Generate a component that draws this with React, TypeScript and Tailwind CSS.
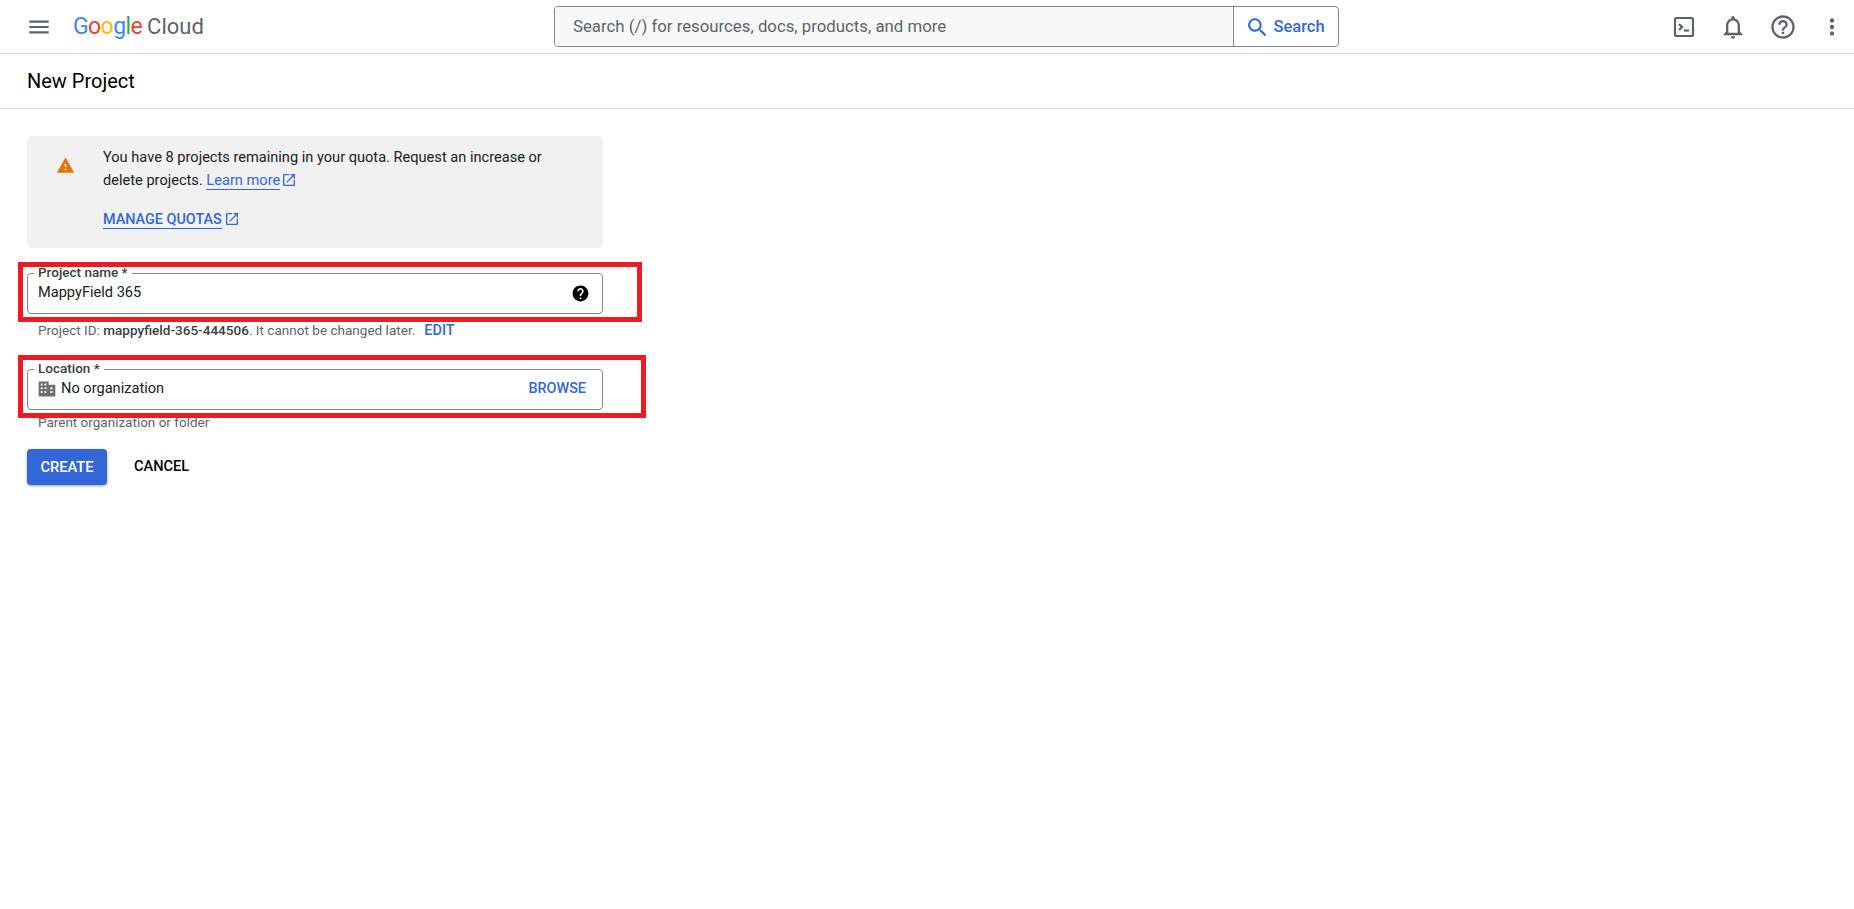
import React from "react";

const Icon = ({ d, className }: { d: string; className: string }) => (
  <svg viewBox="0 0 24 24" fill="currentColor" className={className}>
    <path d={d} />
  </svg>
);

const OPEN_NEW =
  "M19 19H5V5h7V3H5c-1.11 0-2 .9-2 2v14c0 1.1.89 2 2 2h14c1.1 0 2-.9 2-2v-7h-2v7zM14 3v2h3.59l-9.83 9.83 1.41 1.41L19 6.41V10h2V3h-7z";

const BuildingIcon = () => (
  <svg viewBox="0 0 24 24" className="ml-[-1px] h-[20px] w-[20px] text-[#6f6f6f]">
    <path fill="currentColor" d="M2 3h12v4h8v14H2z" />
    <g fill="#fff">
      <rect x="4.5" y="5.5" width="2.2" height="2.2" />
      <rect x="9" y="5.5" width="2.2" height="2.2" />
      <rect x="4.5" y="10" width="2.2" height="2.2" />
      <rect x="9" y="10" width="2.2" height="2.2" />
      <rect x="4.5" y="14.5" width="2.2" height="2.2" />
      <rect x="9" y="14.5" width="2.2" height="2.2" />
      <rect x="16" y="10" width="2.6" height="2.2" />
      <rect x="16" y="14.5" width="2.6" height="2.2" />
    </g>
  </svg>
);

const Header = () => (
  <header className="flex h-[54px] items-center border-b border-[#dadce0] pl-[27px] pr-[9px]">
    <Icon
      d="M3 18h18v-2H3v2zm0-5h18v-2H3v2zm0-7v2h18V6H3z"
      className="h-[24px] w-[24px] shrink-0 scale-[1.08] text-[#5f6368]"
    />
    <div className="ml-[22px] flex w-[481px] items-baseline text-[23px] leading-none tracking-[-0.6px]">
      <span className="text-[#4285f4]">G</span>
      <span className="text-[#ea4335]">o</span>
      <span className="text-[#fbbc04]">o</span>
      <span className="text-[#4285f4]">g</span>
      <span className="text-[#34a853]">l</span>
      <span className="text-[#ea4335]">e</span>
      <span className="ml-[5px] tracking-normal text-[#5f6368] text-[22px]">Cloud</span>
    </div>
    <div className="flex h-[41px] w-[785px] overflow-hidden rounded-[4px] border border-[#80868b]">
      <div className="flex flex-1 items-center bg-[#f8f8f8] pl-[18px] text-[16.8px] text-[#5f6368]">
        Search (/) for resources, docs, products, and more
      </div>
      <div className="flex w-[105px] items-center justify-center gap-[3px] border-l border-[#80868b] pr-[2px] pt-[1px] text-[16.5px] font-medium text-[#3367d6]">
        <Icon
          d="M15.5 14h-.79l-.28-.27C15.41 12.59 16 11.11 16 9.5 16 5.91 13.09 3 9.5 3S3 5.91 3 9.5 5.91 16 9.5 16c1.61 0 3.09-.59 4.23-1.57l.27.28v.79l5 4.99L20.49 19l-4.99-5zm-6 0C7.01 14 5 11.99 5 9.5S7.01 5 9.5 5 14 7.01 14 9.5 11.99 14 9.5 14z"
          className="h-[25px] w-[25px]"
        />
        Search
      </div>
    </div>
    <div className="ml-auto flex items-center gap-[22px] text-[#5f6368]">
      <svg viewBox="0 0 24 24" fill="none" className="h-[24px] w-[24px]">
        <rect x="3" y="3" width="18" height="18" rx="1.5" stroke="currentColor" strokeWidth="2.2" />
        <path d="M7 9l3 3-3 3" stroke="currentColor" strokeWidth="2.2" />
        <path d="M12 15.5h5" stroke="currentColor" strokeWidth="2.2" />
      </svg>
      <Icon
        d="M12 22c1.1 0 2-.9 2-2h-4c0 1.1.9 2 2 2zm6-6v-5c0-3.07-1.63-5.64-4.5-6.32V4c0-.83-.67-1.5-1.5-1.5s-1.5.67-1.5 1.5v.68C7.64 5.36 6 7.92 6 11v5l-2 2v1h16v-1l-2-2zm-2 1H8v-6c0-2.48 1.51-4.5 4-4.5s4 2.02 4 4.5v6z"
        className="ml-[1px] h-[28px] w-[28px]"
      />
      <Icon
        d="M11 18h2v-2h-2v2zm1-16C6.48 2 2 6.48 2 12s4.48 10 10 10 10-4.48 10-10S17.52 2 12 2zm0 18c-4.41 0-8-3.59-8-8s3.59-8 8-8 8 3.59 8 8-3.59 8-8 8zm0-14c-2.21 0-4 1.79-4 4h2c0-1.1.9-2 2-2s2 .9 2 2c0 2-3 1.75-3 5h2c0-2.25 3-2.5 3-5 0-2.21-1.79-4-4-4z"
        className="h-[28px] w-[28px]"
      />
      <Icon
        d="M12 8c1.1 0 2-.9 2-2s-.9-2-2-2-2 .9-2 2 .9 2 2 2zm0 2c-1.1 0-2 .9-2 2s.9 2 2 2 2-.9 2-2-.9-2-2-2zm0 6c-1.1 0-2 .9-2 2s.9 2 2 2 2-.9 2-2-.9-2-2-2z"
        className="h-[26px] w-[26px]"
      />
    </div>
  </header>
);

const Notice = () => (
  <div className="flex h-[112px] w-[576px] rounded-[4px] bg-[#f1f1f1] pt-[10px]">
    <Icon
      d="M1 21h22L12 2 1 21zm12-3h-2v-2h2v2zm0-4h-2v-4h2v4z"
      className="ml-[29px] mt-[10px] h-[19px] w-[19px] shrink-0 text-[#e37400]"
    />
    <div className="ml-[28px] w-[460px] text-[14.6px] leading-[23px] text-[#202124]">
      <p>You have 8 projects remaining in your quota. Request an increase or</p>
      <p>
        delete projects. <span className="border-b border-[#3367d6] text-[#3367d6]">Learn more</span>
        <Icon d={OPEN_NEW} className="ml-[1px] inline h-[16px] w-[16px] align-[-3px] text-[#3367d6]" />
      </p>
      <p className="mt-[16px] text-[14.4px] font-medium text-[#3367d6]">
        <span className="border-b border-[#3367d6]">MANAGE QUOTAS</span>
        <Icon d={OPEN_NEW} className="ml-[2px] inline h-[16px] w-[16px] align-[-3px]" />
      </p>
    </div>
  </div>
);

const Field = ({ label, children }: { label: string; children: React.ReactNode }) => (
  <div className="relative flex h-[41px] w-[576px] items-center rounded-[4px] border border-[#80868b] pb-[1px] pl-[10px] pr-[12px]">
    <span className="absolute left-[6px] top-[-10px] bg-white px-[4px] text-[13.5px] font-medium leading-[16px] text-[#3c4043]">
      {label}
    </span>
    {children}
  </div>
);

const Annotation = ({ className }: { className: string }) => (
  <div className={`pointer-events-none absolute border-[5px] border-[#ed1c24] ${className}`} />
);

export default function App() {
  return (
    <div className="relative min-h-[909px] bg-white font-['Roboto',sans-serif]">
      <Header />
      <div className="flex h-[55px] items-center border-b border-[#dadce0] pl-[27px] text-[20px] text-[#000]">
        New Project
      </div>
      <main className="pl-[27px] pt-[27px]">
        <Notice />
        <div className="mt-[25px]">
          <Field label="Project name *">
            <span className="text-[14.6px] text-[#202124]">MappyField 365</span>
            <Icon
              d="M12 2C6.48 2 2 6.48 2 12s4.48 10 10 10 10-4.48 10-10S17.52 2 12 2zm1 17h-2v-2h2v2zm2.07-7.75l-.9.92C13.45 12.9 13 13.5 13 15h-2v-.5c0-1.1.45-2.1 1.17-2.83l1.24-1.26c.37-.36.59-.86.59-1.41 0-1.1-.9-2-2-2s-2 .9-2 2H8c0-2.21 1.79-4 4-4s4 1.79 4 4c0 .88-.36 1.68-.93 2.25z"
              className="ml-auto h-[19px] w-[19px] text-black"
            />
          </Field>
          <p className="mt-[8px] pl-[11px] text-[13.55px] leading-[16px] text-[#5f6368]">
            Project ID: <span className="font-medium text-[#3c4043]">mappyfield-365-444506</span>. It cannot be
            changed later.
            <span className="ml-[9px] text-[14.5px] font-medium text-[#3367d6]">EDIT</span>
          </p>
        </div>
        <div className="mt-[30px]">
          <Field label="Location *">
            <BuildingIcon />
            <span className="ml-[4px] text-[14.6px] text-[#202124]">No organization</span>
            <span className="ml-auto mr-[4px] text-[14.4px] font-medium text-[#3367d6]">BROWSE</span>
          </Field>
          <p className="mt-[4px] pl-[11px] text-[13.5px] leading-[16px] text-[#5f6368]">Parent organization or folder</p>
        </div>
        <div className="mt-[19px] flex items-center">
          <button className="h-[36px] w-[80px] rounded-[4px] bg-[#3367d6] text-[14.7px] font-medium text-white shadow-[0_1px_3px_rgba(60,64,67,0.5)]">
            CREATE
          </button>
          <button className="ml-[27px] text-[14.6px] font-medium text-black">CANCEL</button>
        </div>
      </main>
      <Annotation className="left-[18px] top-[262px] h-[60px] w-[624px]" />
      <Annotation className="left-[18px] top-[355px] h-[63px] w-[628px]" />
    </div>
  );
}
